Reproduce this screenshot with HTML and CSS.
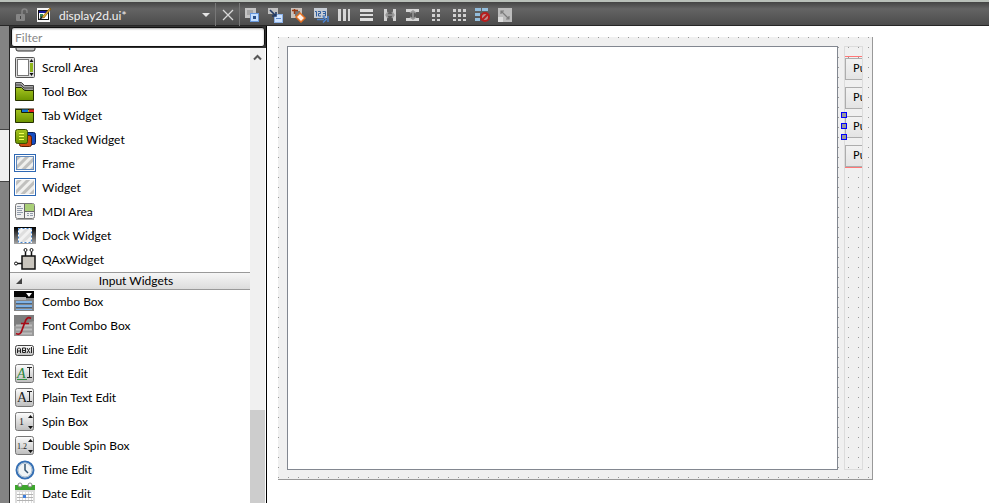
FILE: index.html
```html
<!DOCTYPE html>
<html lang="en">
<head>
<meta charset="utf-8">
<title>display2d.ui</title>
<link rel="stylesheet" href="styles.css">
</head>
<body>
<svg class="defs" aria-hidden="true">
  <defs>
    <linearGradient id="plate" x1="0" y1="0" x2="0" y2="1"><stop offset="0" stop-color="#fdfdfd"/><stop offset="1" stop-color="#bdbdbd"/></linearGradient>
    <linearGradient id="green" x1="0" y1="0" x2="0" y2="1"><stop offset="0" stop-color="#a4c420"/><stop offset="1" stop-color="#6c9400"/></linearGradient>
    <linearGradient id="dark" x1="0" y1="0" x2="0" y2="1"><stop offset="0" stop-color="#000"/><stop offset="1" stop-color="#a8a8a8"/></linearGradient>
    <pattern id="stripes" width="6" height="6" patternUnits="userSpaceOnUse" patternTransform="rotate(45)"><rect width="6" height="6" fill="#f0f0ee"/><rect width="3" height="6" fill="#c0c0be"/></pattern>
    <pattern id="faint" width="6" height="6" patternUnits="userSpaceOnUse" patternTransform="rotate(45)"><rect width="6" height="6" fill="#f2f2f2"/><rect width="3" height="6" fill="#dedede"/></pattern>
  </defs>
</svg>
<header class="toolbar">
  <svg class="lock" width="14" height="14" viewBox="0 0 14 14"><path d="M7 6V3.500a2.500 2.500 0 0 1 5 0V5" fill="none" stroke="#858585" stroke-width="1.500"/><rect x="1" y="6" width="9" height="7" rx="1" fill="#858585"/><rect x="5" y="8" width="1" height="3" fill="#444"/></svg>
  <svg class="doc" width="16" height="16" viewBox="0 0 16 16"><rect x="1" y="1" width="13" height="14" fill="#f6f6f6"/><rect x="2.500" y="3.500" width="10" height="9" fill="#fff" stroke="#111"/><path d="M3 4h9v2H3z" fill="#16169a"/><rect x="4" y="7" width="3" height="3" fill="#338653"/><path d="M3 13l2-4 2 2z" fill="#222"/><path d="M6 10l8-9 1 1-7 9z" fill="#e4ae32" stroke="#654000" stroke-width=".6"/></svg>
  <div class="file">
    <select aria-label="Open document"><option>display2d.ui*</option></select>
    <svg width="8" height="4" viewBox="0 0 8 4"><path d="M0 0h8L4 4z" fill="#e4e4e4"/></svg>
  </div>
  <button class="tool close" aria-label="Close"><svg width="12" height="12" viewBox="0 0 12 12"><path d="M1 1l10 10M11 1L1 11" stroke="#d8d8d8" stroke-width="1.300"/></svg></button>
  <div class="tools">
    <button class="tool" aria-label="Edit widgets"><svg width="16" height="16" viewBox="0 0 16 16"><path d="M1 1h11v10H1z" fill="#c4c4c4"/><path d="M3 3h6v5H3z" fill="#a6a6a6"/><rect x="6.500" y="6.500" width="8" height="8" fill="#c4dfff" stroke="#6697dc"/><path d="M9 9h3v3H9z" fill="#294d84"/></svg></button>
    <button class="tool" aria-label="Edit signals and slots"><svg width="16" height="16" viewBox="0 0 16 16"><path d="M1 1h10v6H1z" fill="#c1c1c1"/><rect x="7.500" y="7.500" width="8" height="8" fill="#cde2ff" stroke="#8cb2e8"/><path d="M9 11.500h5" stroke="#5a86c8"/><path d="M3 3l6 6M9 5v4H5" fill="none" stroke="#213a66" stroke-width="1.600"/></svg></button>
    <button class="tool" aria-label="Edit buddies"><svg width="16" height="16" viewBox="0 0 16 16"><path d="M1 1h11v10H1z" fill="#c9c1bb"/><path d="M5 4h5v5H5z" fill="#777"/><path d="M2 3.500h6M4.500 2v5" stroke="#9d3b12" stroke-width="1.500"/><path d="M10 6l5 5-4 4-5-5z" fill="#fff0e4" stroke="#e36f22" stroke-width="1.500"/></svg></button>
    <button class="tool" aria-label="Edit tab order"><svg width="16" height="16" viewBox="0 0 16 16"><path d="M1 1h13v10H1z" fill="#c7cdd5"/><path d="M2 4.500h1.500v5M5 4.500h2.500v2H5.500v2.500H8M9.500 4.500h3v4.500h-3M10 6.500h2" fill="none" stroke="#305f9f"/><path d="M4 12.500h7M10 9.500l3 3-3 3M15 9v6" fill="none" stroke="#4a82cf" stroke-width="1.500"/></svg></button>
    <button class="tool" aria-label="Lay out horizontally"><svg width="16" height="16" viewBox="0 0 16 16"><path d="M2 2h3v12H2zM7 2h3v12H7zM12 2h2v12h-2z" fill="#d6d6d6"/></svg></button>
    <button class="tool" aria-label="Lay out vertically"><svg width="16" height="16" viewBox="0 0 16 16"><path d="M1 2h13v3H1zM1 7h13v2H1zM1 11h13v3H1z" fill="#dedede"/></svg></button>
    <button class="tool" aria-label="Lay out in horizontal splitter"><svg width="16" height="16" viewBox="0 0 16 16"><path d="M2 2h3v12H2zM11 2h3v12h-3z" fill="#d0d0d0"/><path d="M4 8h8M6 5L4 8l2 3M10 5l2 3-2 3" fill="none" stroke="#999" stroke-width="1.500"/></svg></button>
    <button class="tool" aria-label="Lay out in vertical splitter"><svg width="16" height="16" viewBox="0 0 16 16"><path d="M1 2h13v3H1zM1 11h13v3H1z" fill="#d6d6d6"/><path d="M8 4v8M5 6l3-2 3 2M5 10l3 2 3-2" fill="none" stroke="#999" stroke-width="1.500"/></svg></button>
    <button class="tool" aria-label="Lay out in a form"><svg width="16" height="16" viewBox="0 0 16 16"><path d="M4 2h3v3H4zM9 2h3v3H9zM4 7h3v3H4zM9 7h3v3H9zM4 12h3v2H4zM9 12h3v2H9z" fill="#d0d0d0"/></svg></button>
    <button class="tool" aria-label="Lay out in a grid"><svg width="16" height="16" viewBox="0 0 16 16"><path d="M2 2h3v3H2zM7 2h3v3H7zM12 2h3v3h-3zM2 7h3v3H2zM7 7h3v3H7zM12 7h3v3h-3zM2 12h3v2H2zM7 12h3v2H7zM12 12h3v2h-3z" fill="#d0d0d0"/></svg></button>
    <button class="tool" aria-label="Break layout"><svg width="16" height="16" viewBox="0 0 16 16"><path d="M1 1h6v3H1zM8 1h6v3H8zM1 6h5v3H1zM1 11h5v3H1z" fill="#93bddc"/><circle cx="11" cy="10" r="4" fill="#b98d8d" stroke="#b91d1d" stroke-width="2"/><path d="M8 13l6-6" stroke="#b91d1d" stroke-width="2"/></svg></button>
    <button class="tool" aria-label="Adjust size"><svg width="16" height="16" viewBox="0 0 16 16"><path d="M1 1h14v14H1z" fill="#bcbcbc"/><path d="M1 10h5v5H1z" fill="#dcdcdc"/><path d="M4 4l8 8M4 7V4h3M12 9v3H9" fill="none" stroke="#7c7c7c" stroke-width="1.200"/></svg></button>
  </div>
</header>
<div class="workspace">
  <div class="rail"><div class="rail-tab"></div></div>
  <aside class="widget-box">
    <div class="filter"><input type="text" placeholder="Filter" aria-label="Filter"></div>
    <div class="list-area">
      <div class="list">
        <ul>
          <li><svg width="24" height="24" viewBox="0 0 24 24"><rect x="3" y="2" width="19" height="17" rx="2" fill="url(#plate)" stroke="#333"/></svg>Group Box</li>
          <li><svg width="24" height="24" viewBox="0 0 24 24"><rect x="2.500" y="1.500" width="19" height="20" rx="1" fill="#ddd" stroke="#555"/><rect x="4.500" y="3.500" width="11" height="16" fill="#fff" stroke="#777"/><rect x="17" y="7" width="3" height="9" fill="#8fb51a"/><path d="M16.500 6l2-3 2 3zM16.500 17l2 3 2-3z" fill="#111"/></svg>Scroll Area</li>
          <li><svg width="24" height="24" viewBox="0 0 24 24"><path d="M2.500 8V2.500h6l3 3h9V12z" fill="#a2a2a2" stroke="#444"/><path d="M3 5h5l3 3h10" fill="none" stroke="#444"/><path d="M2.500 7.500h6l3 3h9v10h-18z" fill="url(#green)" stroke="#243000"/></svg>Tool Box</li>
          <li><svg width="24" height="24" viewBox="0 0 24 24"><path d="M2.500 5.500h18v13h-18z" fill="url(#green)" stroke="#243000"/><path d="M9 5h6v3H9z" fill="#1674d4"/><path d="M16 5h5v3h-5z" fill="#e02020"/><path d="M8.500 5v3.500H21M2 5h19" fill="none" stroke="#182000"/></svg>Tab Widget</li>
          <li><svg width="24" height="24" viewBox="0 0 24 24"><rect x="10.500" y="4.500" width="12" height="12" rx="2" fill="#174cc0" stroke="#08205c"/><rect x="6.500" y="7.500" width="12" height="11" rx="2" fill="#cf4c12" stroke="#5d1d00"/><rect x="2.500" y="1.500" width="12" height="14" rx="2" fill="url(#green)" stroke="#3a4d05"/><path d="M6 5.500h5M6 8.500h5M6 11.500h5" stroke="#f2ff54"/></svg>Stacked Widget</li>
          <li><svg width="24" height="24" viewBox="0 0 24 24"><rect x="1.500" y="2.500" width="21" height="17" fill="#fff" stroke="#2e68b4"/><rect x="3.500" y="4.500" width="17" height="13" fill="url(#stripes)" stroke="#6289bb"/></svg>Frame</li>
          <li><svg width="24" height="24" viewBox="0 0 24 24"><rect x="1.500" y="2.500" width="21" height="17" fill="#fff" stroke="#2e68b4"/><rect x="3" y="4" width="18" height="14" fill="url(#stripes)"/></svg>Widget</li>
          <li><svg width="24" height="24" viewBox="0 0 24 24"><rect x="2.500" y="3.500" width="19" height="15" rx="2" fill="#f0f0f0" stroke="#777"/><path d="M12 4h9v7h-9z" fill="#a9cf77"/><path d="M4 6.500h4M4 8.500h6M4 10.500h5M4 12.500h6M4 14.500h4M14 13.500h2M17 13.500h3M14 15.500h2M17 15.500h3" stroke="#929dac"/><path d="M11.500 4v14M12 11.500h9" stroke="#666"/><path d="M3 19.500h18" stroke="#aaa"/></svg>MDI Area</li>
          <li><svg width="24" height="24" viewBox="0 0 24 24"><path d="M1 3h22v17H1z" fill="url(#dark)"/><rect x="5.500" y="4.500" width="13" height="14" fill="url(#faint)" stroke="#fff"/><rect x="5.500" y="4.500" width="13" height="14" fill="none" stroke="#4385d0" stroke-dasharray="2 2"/></svg>Dock Widget</li>
          <li><svg width="24" height="24" viewBox="0 0 24 24"><path d="M12.500 9V4M18.500 9V4M4 15.500h5" stroke="#111" stroke-width="1.500"/><circle cx="12.500" cy="2" r="1.500" fill="#fff" stroke="#111"/><circle cx="18.500" cy="2" r="1.500" fill="#fff" stroke="#111"/><circle cx="3" cy="15.500" r="1.500" fill="#fff" stroke="#111"/><rect x="9" y="8" width="13" height="13" fill="#c9c5bd" stroke="#111" stroke-width="1.500"/></svg>QAxWidget</li>
        </ul>
        <button class="category"><svg width="6" height="6" viewBox="0 0 6 6"><path d="M6 0v6H0z" fill="#444"/></svg><span>Input Widgets</span></button>
        <ul>
          <li><svg width="24" height="24" viewBox="0 0 24 24"><path d="M1 1h20v7H1z" fill="#050505"/><path d="M1 8h20v13H1z" fill="#858585"/><path d="M1 7h12v3H1z" fill="#b3b3b3"/><path d="M13 3h6l-3 4z" fill="#fff"/><path d="M3 11h16v2H3zM3 15h16v2H3zM3 19h16v1H3z" fill="#7fb2e6"/><path d="M3 13.500h16M3 17.500h16" stroke="#46627f"/></svg>Combo Box</li>
          <li><svg width="24" height="24" viewBox="0 0 24 24"><path d="M1 1h20v21H1z" fill="#999"/><path d="M1 1h20v6L1 12z" fill="#7d7d7d"/><path d="M3 11.500h16M3 15.500h16M3 19.500h16" stroke="#bcbcbc" stroke-width="2"/><path d="M18 4.500c-3-2-5 0-6 3.500l-3 8c-1 4-3 5-6 3.500M8 9.500h8" fill="none" stroke="#a70c18" stroke-width="1.700"/></svg>Font Combo Box</li>
          <li><svg width="24" height="24" viewBox="0 0 24 24"><rect x="2.500" y="7.500" width="18" height="10" rx="2" fill="url(#plate)" stroke="#444"/><path d="M4.500 15v-4l1-1h1l1 1v4M5 13h2M9.500 10v4.500h3v-2h-3 3V10h-3M14 10l3 5M17 10l-3 5M18.500 9v6" fill="none" stroke="#222"/></svg>Line Edit</li>
          <li><svg width="24" height="24" viewBox="0 0 24 24"><rect x="2.500" y="2.500" width="18" height="18" rx="2" fill="url(#plate)" stroke="#777"/><text class="letter green" x="4" y="16">A</text><path d="M14 5.500h5M14 15.500h5M16.500 5v11" stroke="#222"/><path d="M4 17.500h10" stroke="#319044"/></svg>Text Edit</li>
          <li><svg width="24" height="24" viewBox="0 0 24 24"><rect x="2.500" y="2.500" width="18" height="18" rx="2" fill="url(#plate)" stroke="#777"/><text class="letter" x="4" y="16">A</text><path d="M14 5.500h5M14 15.500h5M16.500 5v11" stroke="#222"/></svg>Plain Text Edit</li>
          <li><svg width="24" height="24" viewBox="0 0 24 24"><rect x="2.500" y="2.500" width="18" height="18" rx="2" fill="url(#plate)" stroke="#777"/><text class="digit" x="6" y="15">1</text><path d="M15 8h5l-2.500-3zM15 16h5l-2.500 3z" fill="#111"/></svg>Spin Box</li>
          <li><svg width="24" height="24" viewBox="0 0 24 24"><rect x="2.500" y="2.500" width="18" height="18" rx="2" fill="url(#plate)" stroke="#777"/><text class="digit small" x="4" y="15">1.2</text><path d="M15 8h5l-2.500-3zM15 16h5l-2.500 3z" fill="#111"/></svg>Double Spin Box</li>
          <li><svg width="24" height="24" viewBox="0 0 24 24"><circle cx="12" cy="12" r="8.500" fill="#f0f4f6" stroke="#356fb4" stroke-width="2"/><circle cx="12" cy="12" r="7" fill="none" stroke="#a4b9cc"/><path d="M12 6v6l3 3" fill="none" stroke="#35536f" stroke-width="1.500"/></svg>Time Edit</li>
          <li><svg width="24" height="24" viewBox="0 0 24 24"><rect x="2" y="3" width="20" height="19" fill="#ddd"/><path d="M2 3h20v5H2z" fill="#3fa62e"/><circle cx="7" cy="3" r="2" fill="#fff" stroke="#888"/><circle cx="17" cy="3" r="2" fill="#fff" stroke="#888"/><path d="M4 11h16M4 14h16M4 17h16M4 20h16" stroke="#fff" stroke-width="2" stroke-dasharray="2 1"/><path d="M4 12.500h16M4 15.500h16M4 18.500h16" stroke="#b3b3b3"/><path d="M10 13h3v3h-3z" fill="#3f7fdc"/></svg>Date Edit</li>
        </ul>
      </div>
      <div class="scrollbar">
        <button aria-label="Scroll up"><svg width="9" height="7" viewBox="0 0 9 7"><path d="M1 5.500L4.500 2 8 5.500" fill="none" stroke="#555" stroke-width="2"/></svg></button>
        <div class="thumb"></div>
      </div>
    </div>
  </aside>
  <main class="canvas">
    <div class="form">
      <div class="view"></div>
      <div class="column">
        <div class="stack">
          <button>PushButton</button>
          <button>PushButton</button>
          <button>PushButton</button>
          <button>PushButton</button>
        </div>
        <div class="handles"><i></i><i></i><i></i></div>
      </div>
    </div>
  </main>
</div>
</body>
</html>
```
FILE: styles.css
```css
* { box-sizing: border-box; }
body {
  margin: 0;
  height: 100vh;
  display: flex;
  flex-direction: column;
  overflow: hidden;
  background: #fff;
  color: #000;
  font: 12px/24px Lato, "Open Sans", sans-serif;
}
button, input, select { font: inherit; color: inherit; border: 0; padding: 0; margin: 0; border-radius: 0; background: none; }
ul { list-style: none; margin: 0; padding: 0; }
svg { display: block; flex: none; }
.defs { position: absolute; width: 0; height: 0; }

.toolbar {
  flex: none;
  height: 26px;
  display: flex;
  align-items: center;
  padding: 2px 0 0 15px;
  border-top: 2px solid #b9c0b9;
  border-bottom: 1px solid #262626;
  background: linear-gradient(#444, #646464 30%, #4c4c4c);
}
.doc { margin-left: 7px; }
.file {
  display: flex;
  align-items: center;
  width: 164px;
  height: 23px;
  padding: 0 5px 0 7px;
  border-right: 1px solid #777;
}
.file select { appearance: none; flex: 1; height: 22px; color: #f0f0f0; }
.tool { display: flex; justify-content: center; width: 16px; }
.close { width: 24px; height: 23px; align-items: center; border-right: 1px solid #777; }
.tools { display: flex; gap: 7px; margin-left: 4px; }

.workspace { flex: 1; min-height: 0; display: flex; }
.rail { width: 10px; flex: none; padding-top: 103px; background: #838383; border-right: 1px solid #222; }
.rail-tab { height: 53px; background: #efefef; border: solid #444; border-width: 1px 0; }
.widget-box { width: 257px; flex: none; display: flex; flex-direction: column; border-right: 1px solid #000; }
.filter { flex: none; height: 22px; background: #333; padding: 1px; }
.filter input {
  display: block;
  width: 100%;
  height: 20px;
  padding: 0 3px;
  line-height: 18px;
  background: #fff;
  border: 1px solid #111;
  border-radius: 3px;
  box-shadow: inset 0 1px 2px #aaa;
}
.filter input::placeholder { color: #888; opacity: 1; }
.list-area { flex: 1; min-height: 0; display: flex; overflow: hidden; }
.list { flex: 1; margin-top: -16px; }
.list li { display: flex; align-items: center; height: 24px; gap: 5px; padding-left: 3px; white-space: nowrap; }
.category {
  display: flex;
  align-items: center;
  width: 100%;
  height: 18px;
  padding-left: 6px;
  line-height: 16px;
  border: solid #999;
  border-width: 1px 0;
  background: linear-gradient(#f6f6f6, #dcdcdc);
}
.category span { flex: 1; }
.letter { font: 14px "Liberation Serif", serif; fill: #222; }
.green { fill: #258338; font-style: italic; }
.digit { font: 10px "Liberation Serif", serif; fill: #222; }
.small { font-size: 8px; }
.scrollbar { width: 16px; flex: none; display: flex; flex-direction: column; justify-content: space-between; background: #f0f0f0; border-right: 1px solid #fff; }
.scrollbar button { display: flex; justify-content: center; padding-top: 6px; }
.thumb { height: 20.500%; background: #cdcdcd; }

.canvas { flex: 1; min-width: 0; padding: 11px 116px 23px 11px; }
.form {
  display: flex;
  gap: 6px;
  height: 100%;
  padding: 9px;
  border: solid #999;
  border-width: 0 1px 1px 0;
  background: conic-gradient(from 270deg at 1px 1px, #999 90deg, transparent 0) 0 0 / 10px 10px #f0f0f0;
}
.view { flex: 1; background: #fff; border: 1px solid #828790; }
.column { position: relative; width: 19px; flex: none; border: 1px solid #dcdcdc; }
.stack {
  display: flex;
  flex-direction: column;
  gap: 7px;
  margin-top: 9px;
  padding-top: 1px;
  overflow: hidden;
  border: solid #f77;
  border-width: 1px 0;
}
.stack button {
  width: 75px;
  height: 22px;
  padding: 0 0 0 7px;
  text-align: left;
  line-height: 20px;
  font-family: "DejaVu Sans", sans-serif;
  font-size: 11px;
  border: 1px solid #adadad;
  background: linear-gradient(#f2f2f2, #e4e4e4);
}
.handles { position: absolute; left: -4px; top: 65px; display: grid; gap: 5px; }
.handles i { width: 6px; height: 6px; background: #999; border: 1px solid #00f; }
```
